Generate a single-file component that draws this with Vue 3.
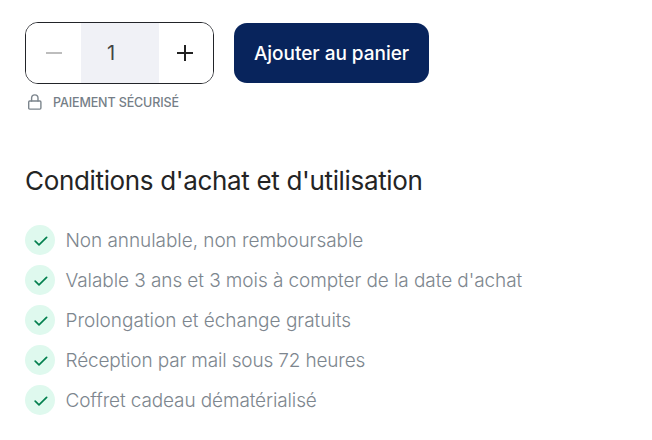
<script setup>
import { ref } from 'vue'

const quantity = ref(1)
const conditions = [
  { text: 'Non annulable, non remboursable', spacing: -0.06 },
  { text: "Valable 3 ans et 3 mois à compter de la date d'achat", spacing: -0.08 },
  { text: 'Prolongation et échange gratuits', spacing: -0.01 },
  { text: 'Réception par mail sous 72 heures', spacing: -0.16 },
  { text: 'Coffret cadeau dématérialisé', spacing: -0.12 },
]
</script>

<template>
  <main class="page">
    <div class="purchase">
      <div class="stepper">
        <button class="step minus" aria-label="Diminuer" @click="quantity = Math.max(1, quantity - 1)">
          <svg width="18" height="18" viewBox="0 0 18 18"><path d="M1 9H17" /></svg>
        </button>
        <span class="quantity">{{ quantity }}</span>
        <button class="step plus" aria-label="Augmenter" @click="quantity++">
          <svg width="18" height="18" viewBox="0 0 18 18"><path d="M1 9H17M9 1V17" /></svg>
        </button>
      </div>
      <button class="add"><span>Ajouter au panier</span></button>
    </div>
    <div class="secure">
      <svg width="14" height="16" viewBox="0 0 14 16">
        <rect x="0.7" y="7" width="12.2" height="8.1" rx="1" />
        <path d="M3.6 7V4.1a3.2 3.2 0 0 1 6.4 0V7" />
      </svg>
      <span>PAIEMENT SÉCURISÉ</span>
    </div>
    <h2><span>Conditions d'achat et d'utilisation</span></h2>
    <ul>
      <li v-for="item in conditions" :key="item.text">
        <span class="badge">
          <svg width="14" height="10" viewBox="0 0 14 10"><path d="M1.2 5.2L5 8.8L12.6 1.4" /></svg>
        </span>
        <span class="label" :style="{ letterSpacing: item.spacing + 'px' }">{{ item.text }}</span>
      </li>
    </ul>
  </main>
</template>

<style>
body { background: #fff; }
</style>

<style scoped>
.page { height: 440px; box-sizing: border-box; padding: 22px 25px 0; font-family: Inter, "Liberation Sans", sans-serif; overflow: hidden; }
button { border: 0; padding: 0; font-family: inherit; }
svg { display: block; fill: none; stroke-linecap: round; stroke-linejoin: round; }
.purchase { display: flex; align-items: center; gap: 20px; }
.stepper { width: 189px; height: 62px; box-sizing: border-box; border: 1px solid #222429; border-radius: 13px; display: flex; overflow: hidden; }
.step { flex: none; width: 55px; background: #fff; display: flex; align-items: center; justify-content: center; }
.step svg { stroke-width: 2; stroke-linecap: butt; }
.minus { padding-left: 1px; }
.minus svg { stroke: #bdbdbd; }
.plus { width: 54px; padding-right: 3px; }
.plus svg { stroke: #222; }
.quantity { width: 78px; background: #f0f1f6; box-sizing: border-box; padding-right: 18px; text-align: center; font-size: 20px; line-height: 60px; color: #444; }
.add { width: 195px; height: 60px; border-radius: 13px; background: #08245c; color: #fff; font-size: 19px; font-weight: 500; white-space: nowrap; letter-spacing: -0.03px; }
.secure { height: 16px; margin: 10px 0 0 3px; display: flex; align-items: center; gap: 11px; color: #757e87; font-size: 12.5px; font-weight: 450; letter-spacing: -0.12px; }
.secure svg { stroke: #7c858d; stroke-width: 1.4; }
h2 { margin: 53px 0 0; height: 36px; line-height: 36px; font-size: 26px; font-weight: 400; letter-spacing: -0.34px; color: #242424; white-space: nowrap; }
ul { list-style: none; margin: 26px 0 0; padding: 0; display: grid; gap: 10px; }
li { height: 30px; display: flex; align-items: center; gap: 10.5px; color: #7d868e; font-size: 19px; font-weight: 300; white-space: nowrap; }
.badge { width: 30px; height: 30px; box-sizing: border-box; padding: 1px 0 0 1px; border-radius: 50%; background: #dff9ee; display: flex; align-items: center; justify-content: center; }
.badge svg { stroke: #04804f; stroke-width: 1.7; }
</style>
